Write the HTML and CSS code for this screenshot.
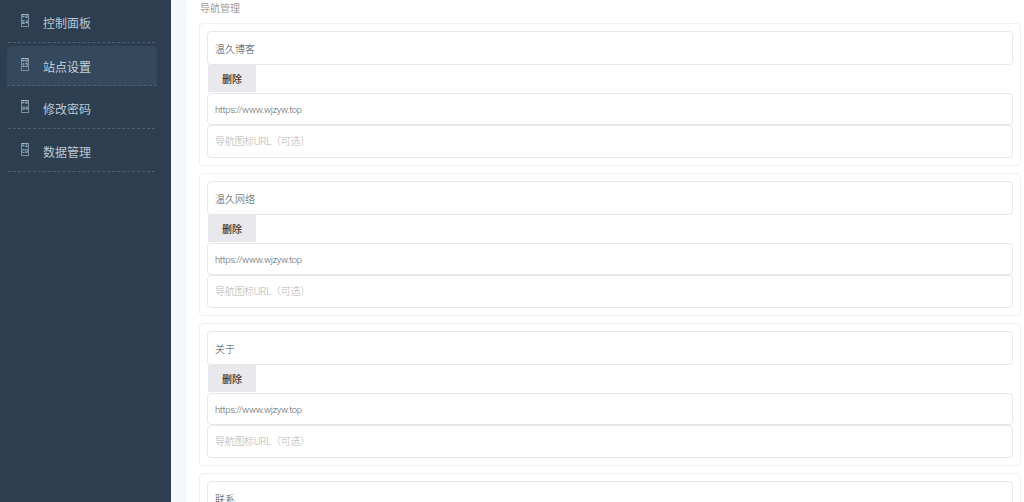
FILE: index.html
```html
<!DOCTYPE html>
<html lang="en">
<head>
    <meta charset="UTF-8">
    <title>站点设置</title>
    <link rel="stylesheet" href="styles.css">
</head>
<body>
<div class="layout">
    <aside class="sidebar">
        <a class="nav-item"><span class="hexbox">F0<br>E4</span>控制面板</a>
        <a class="nav-item active"><span class="hexbox">F0<br>13</span>站点设置</a>
        <a class="nav-item"><span class="hexbox">F0<br>84</span>修改密码</a>
        <a class="nav-item"><span class="hexbox">F1<br>C0</span>数据管理</a>
    </aside>
    <main class="content">
        <div class="panel">
            <label class="section-title">导航管理</label>

            <div class="nav-card">
                <input class="field title-field" type="text" value="温久博客">
                <button class="del-btn" type="button">删除</button>
                <input class="field url-field" type="text" value="https://www.wjzyw.top">
                <input class="field" type="text" placeholder="导航图标URL（可选）">
            </div>

            <div class="nav-card">
                <input class="field title-field" type="text" value="温久网络">
                <button class="del-btn" type="button">删除</button>
                <input class="field url-field" type="text" value="https://www.wjzyw.top">
                <input class="field" type="text" placeholder="导航图标URL（可选）">
            </div>

            <div class="nav-card">
                <input class="field title-field" type="text" value="关于">
                <button class="del-btn" type="button">删除</button>
                <input class="field url-field" type="text" value="https://www.wjzyw.top">
                <input class="field" type="text" placeholder="导航图标URL（可选）">
            </div>

            <div class="nav-card">
                <input class="field title-field" type="text" value="联系">
            </div>
        </div>
    </main>
</div>
</body>
</html>
```

FILE: styles.css
```css
html, body {
    margin: 0;
    height: 502px;
    overflow: hidden;
}

body {
    font-family: Roboto, "Noto Sans CJK SC", sans-serif;
    background-color: #f5f8fb;
}

.layout {
    display: flex;
    height: 502px;
}

.sidebar {
    width: 171px;
    flex-shrink: 0;
    box-sizing: border-box;
    padding: 0 16px 0 8px;
    background-color: #2c3e50;
}

.nav-item {
    display: flex;
    align-items: center;
    height: 43px;
    box-sizing: border-box;
    padding-left: 13px;
    padding-top: 3px;
    border-bottom: 1px dashed #4f5f70;
    color: #bcc7d2;
    font-size: 12px;
}

.nav-item.active {
    margin: 3px -2px 0 -1px;
    padding-left: 14px;
    height: 40px;
    padding-top: 1px;
    border-radius: 5px 5px 0 0;
    background-color: #34495e;
    color: #c6d1dc;
}

.hexbox {
    width: 6px;
    height: 11px;
    margin-right: 14px;
    margin-top: -4px;
    border: 1px solid #7f8e9d;
    color: #d5dce3;
    font-family: "Liberation Mono", monospace;
    font-size: 5px;
    line-height: 5.5px;
    text-align: center;
    flex-shrink: 0;
}

.content {
    flex: 1;
    padding-left: 16px;
}

.panel {
    height: 100%;
    box-sizing: border-box;
    padding: 0 3px 0 12px;
    background-color: white;
}

.section-title {
    display: block;
    height: 23px;
    padding-left: 1px;
    color: #a0a0a0;
    font-size: 10px;
    line-height: 18px;
}

.nav-card {
    box-sizing: border-box;
    height: 143px;
    margin-bottom: 7px;
    padding: 7px;
    border: 1px solid #f0f0f0;
    border-radius: 4px;
}

.field {
    display: block;
    width: 100%;
    height: 33px;
    box-sizing: border-box;
    padding: 0 7px;
    border: 1px solid #e8e8e8;
    border-radius: 4px;
    outline: none;
    color: #666;
    font-family: inherit;
    font-size: 10px;
    font-weight: 300;
}

.field::placeholder {
    color: #b4b4b4;
    letter-spacing: -0.3px;
}

.title-field {
    height: 34px;
    color: #4a4a4a;
}

.url-field {
    height: 32px;
    font-size: 9.5px;
    letter-spacing: -0.35px;
}

.del-btn {
    display: block;
    width: 48px;
    height: 27px;
    margin: 0 0 1px 1px;
    padding: 0;
    border: none;
    background-color: #e9e9ed;
    color: #333;
    font-family: inherit;
    font-size: 10px;
    font-weight: 500;
}
```
